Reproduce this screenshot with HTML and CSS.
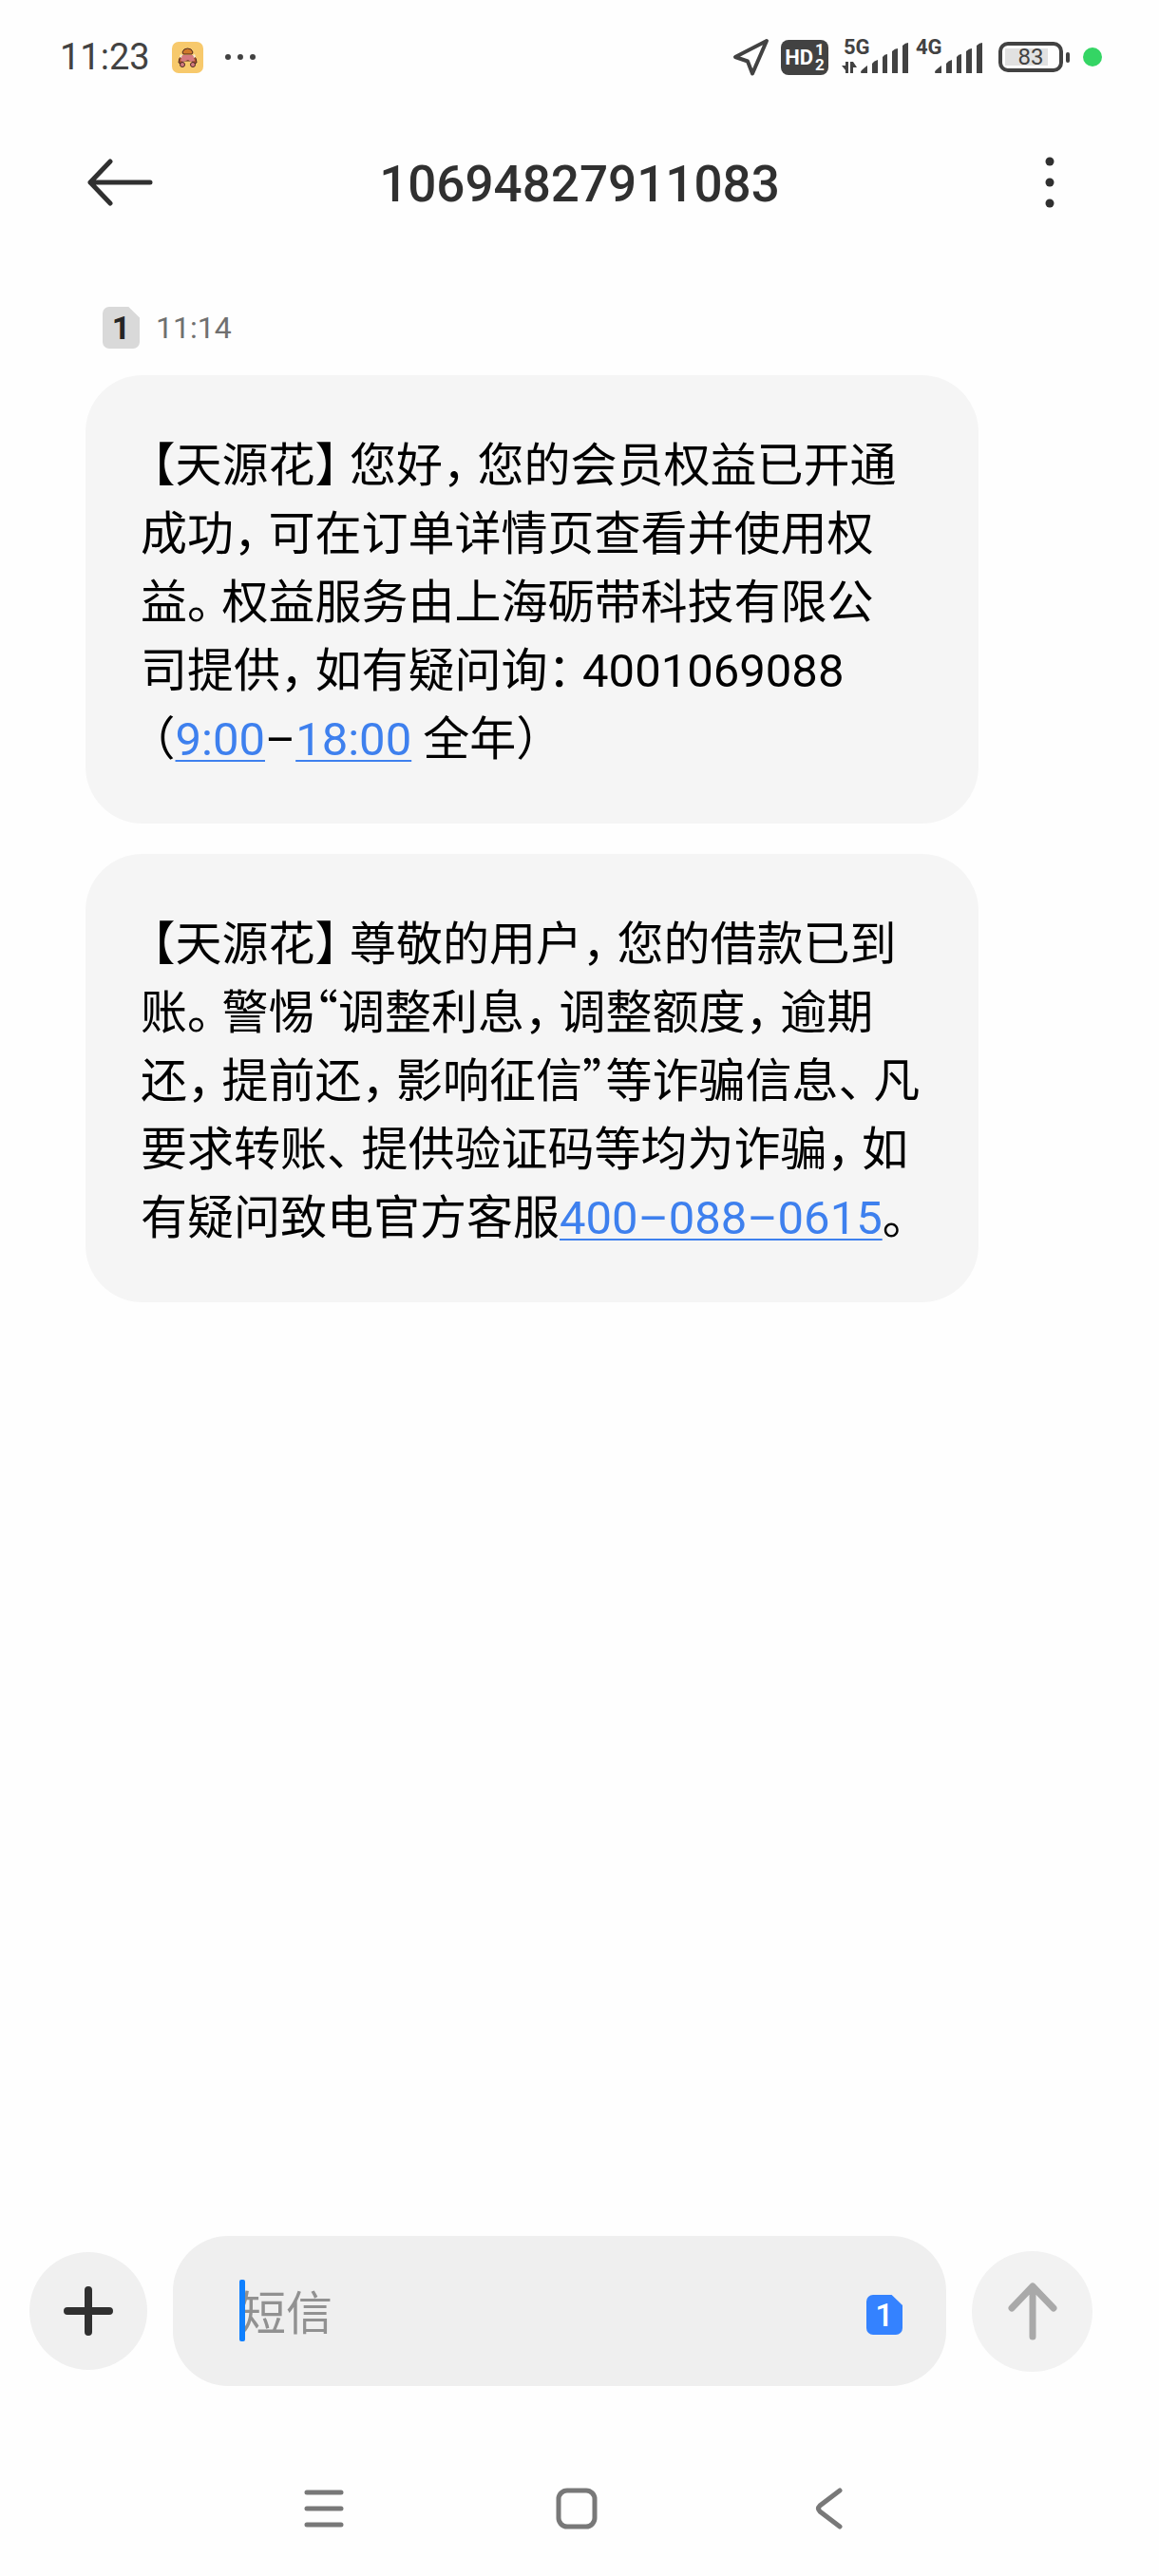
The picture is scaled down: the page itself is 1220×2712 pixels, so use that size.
FILE: index.html
```
<!DOCTYPE html>
<html lang="zh-CN">
<head>
    <meta charset="UTF-8">
    <meta name="viewport" content="width=device-width, initial-scale=1.0">
    <title>10694827911083</title>
    <link rel="stylesheet" href="styles.css">
</head>
<body>
    <div class="status-bar">
        <span class="clock">11:23</span>
        <svg class="app-icon" width="33" height="33" viewBox="0 0 33 33">
            <rect width="33" height="33" rx="7" fill="#f7c96c"/>
            <path d="M10 15q-3 2-3 7l3 1 2-3h9l2 3 3-1q0-5-3-7z" fill="#a9502f" stroke="#4d2a22" stroke-width="1"/>
            <path d="M11 11q1-4 5.500-4t5.500 4l-1 2H12z" fill="#cf7a2c" stroke="#4d2a22" stroke-width="1"/>
            <path d="M11 14h11l2 6-4 1-3-2-5 2-3-1z" fill="#d57a80"/>
            <path d="M9 13l2 1-1 3-2-1zM22 14l2-1 1 3-2 1z" fill="#f6ead2"/>
            <circle cx="11" cy="24" r="2.500" fill="#d57a80" stroke="#4d2a22"/>
            <circle cx="22" cy="24" r="2.500" fill="#d57a80" stroke="#4d2a22"/>
        </svg>
        <svg class="more-apps" width="32" height="8" viewBox="0 0 32 8" fill="#424242">
            <circle cx="3" cy="4" r="3"/>
            <circle cx="16" cy="4" r="3"/>
            <circle cx="29" cy="4" r="3"/>
        </svg>
        <div class="status-right">
            <svg class="location" width="42" height="42" viewBox="0 0 42 42">
                <path d="M37 4L4 21l13 4.500 5 13z" fill="none" stroke="#424242" stroke-width="4" stroke-linejoin="round"/>
            </svg>
            <span class="hd">HD<span class="hd-sims"><span>1</span><span>2</span></span></span>
            <span class="signal">
                <span class="network">5G</span>
                <svg width="72" height="36" viewBox="0 0 72 36" fill="#424242">
                    <path d="M5 23h3v12H5v-3l-4-5h4zM10 35V23h3l4 6h-4v6z"/>
                    <path d="M22 35q-1 0-1-1 0-2 7-7v8zM33 35v-10q2-3 6-4v14zM44 35V18q2-3 5-3v20zM54 35V12q3-3 6-3v26zM65 35V6q3-3 6-3v32z"/>
                </svg>
            </span>
            <span class="signal signal-second">
                <span class="network">4G</span>
                <svg width="53" height="36" viewBox="19 0 53 36" fill="#424242">
                    <path d="M22 35q-1 0-1-1 0-2 7-7v8zM33 35v-10q2-3 6-4v14zM44 35V18q2-3 5-3v20zM54 35V12q3-3 6-3v26zM65 35V6q3-3 6-3v32z"/>
                </svg>
            </span>
            <span class="battery"><span class="battery-level">83</span></span>
            <span class="privacy-dot"></span>
        </div>
    </div>

    <header class="header">
        <button class="icon-btn back" aria-label="返回">
            <svg width="74" height="50" viewBox="0 0 74 50" fill="none" stroke="#303030" stroke-width="5" stroke-linecap="round" stroke-linejoin="round">
                <path d="M25 3L4 25l21 22M4 25h63"/>
            </svg>
        </button>
        <h1>10694827911083</h1>
        <button class="icon-btn" aria-label="更多">
            <svg width="10" height="54" viewBox="0 0 10 54" fill="#303030">
                <circle cx="5" cy="5" r="4.500"/>
                <circle cx="5" cy="27" r="4.500"/>
                <circle cx="5" cy="49" r="4.500"/>
            </svg>
        </button>
    </header>

    <main class="messages">
        <div class="message-meta">
            <span class="sim">1</span>
            <time>11:14</time>
        </div>
        <p class="bubble"><span class="p open">【</span>天源花<span class="p">】</span>您好<span class="p">&#xFF0C;</span>您的会员权益已开通<br>成功<span class="p">&#xFF0C;</span>可在订单详情页查看并使用权<br>益<span class="p">。</span>权益服务由上海砺带科技有限公<br>司提供<span class="p">&#xFF0C;</span>如有疑问询<span class="p">&#xFF1A;</span>4001069088<br><span class="p open">&#xFF08;</span><a href="#">9:00</a>–<a href="#">18:00</a> 全年<span class="p">&#xFF09;</span></p>
        <p class="bubble"><span class="p open">【</span>天源花<span class="p">】</span>尊敬的用户<span class="p">&#xFF0C;</span>您的借款已到<br>账<span class="p">。</span>警惕<span class="quote">“</span>调整利息<span class="p">&#xFF0C;</span>调整额度<span class="p">&#xFF0C;</span>逾期<br>还<span class="p">&#xFF0C;</span>提前还<span class="p">&#xFF0C;</span>影响征信<span class="quote">”</span>等诈骗信息<span class="p">、</span>凡<br>要求转账<span class="p">、</span>提供验证码等均为诈骗<span class="p">&#xFF0C;</span>如<br>有疑问致电官方客服<a href="tel:4000880615">400–088–0615</a><span class="p">。</span></p>
    </main>

    <form class="composer">
        <button type="button" class="round-btn add" aria-label="添加">
            <svg width="52" height="52" viewBox="0 0 52 52" stroke="#303030" stroke-width="8" stroke-linecap="round">
                <path d="M26 4v44M4 26h44"/>
            </svg>
        </button>
        <div class="field">
            <span class="caret"></span>
            <input type="text" placeholder="短信" aria-label="短信">
            <button type="button" class="sim sim-active" aria-label="SIM 1">1</button>
        </div>
        <button type="button" class="round-btn send" aria-label="发送">
            <svg width="52" height="62" viewBox="0 0 52 62" fill="none" stroke="#a9a9a9" stroke-width="7" stroke-linecap="round" stroke-linejoin="round">
                <path d="M4 28L26 5l22 23M26 5v53"/>
            </svg>
        </button>
    </form>

    <nav class="nav-bar">
        <button class="icon-btn" aria-label="最近任务">
            <svg width="44" height="44" viewBox="0 0 44 44" stroke="#787878" stroke-width="5" stroke-linecap="round">
                <path d="M4 5h36M4 22h36M4 39h36"/>
            </svg>
        </button>
        <button class="icon-btn" aria-label="主屏幕">
            <svg width="44" height="44" viewBox="0 0 44 44" fill="none" stroke="#787878" stroke-width="5">
                <rect x="3" y="3" width="38" height="38" rx="9"/>
            </svg>
        </button>
        <button class="icon-btn" aria-label="返回">
            <svg width="44" height="44" viewBox="0 0 44 44" fill="none" stroke="#787878" stroke-width="5" stroke-linecap="round">
                <path d="M33 3L12 19q-3 3 0 6l21 16"/>
            </svg>
        </button>
    </nav>
</body>
</html>
```
FILE: styles.css
```
* {
    box-sizing: border-box;
}

body {
    display: flex;
    flex-direction: column;
    min-height: 100vh;
    margin: 0;
    background-color: #fefefe;
    color: #000;
    font-family: Roboto, "Noto Sans CJK SC", sans-serif;
}

button {
    padding: 0;
    border: none;
    background: none;
    font-family: inherit;
    cursor: pointer;
}

svg {
    display: block;
}

/* Status bar */
.status-bar {
    display: flex;
    align-items: center;
    height: 120px;
    padding: 0 60px 0 63px;
    color: #424242;
}

.clock {
    font-size: 38px;
}

.app-icon {
    margin-left: 23px;
}

.more-apps {
    margin-left: 23px;
}

.status-right {
    display: flex;
    align-items: center;
    margin-left: auto;
}

.hd {
    display: flex;
    align-items: center;
    justify-content: center;
    gap: 2px;
    width: 50px;
    height: 37px;
    margin-left: 10px;
    border-radius: 8px;
    background-color: #424242;
    color: #fff;
    font-size: 22px;
    font-weight: 700;
}

.hd-sims {
    display: flex;
    flex-direction: column;
    font-size: 17px;
    line-height: 16px;
}

.signal {
    position: relative;
    margin-left: 13px;
}

.signal-second {
    margin-left: 25px;
}

.network {
    position: absolute;
    top: -3px;
    left: 3px;
    font-size: 22px;
    font-weight: 700;
    line-height: 22px;
}

.signal-second .network {
    left: -18px;
}

.battery {
    position: relative;
    width: 68px;
    height: 32px;
    margin-left: 16px;
    padding: 3px;
    border: 4px solid #424242;
    border-radius: 10px;
}

.battery::after {
    content: "";
    position: absolute;
    top: 7px;
    right: -11px;
    width: 4px;
    height: 11px;
    border-radius: 2px;
    background-color: #424242;
}

.battery-level {
    display: block;
    height: 18px;
    background: linear-gradient(to right, #e1e1e1 83%, transparent 83%);
    font-size: 24px;
    line-height: 19px;
    text-align: center;
}

.privacy-dot {
    width: 20px;
    height: 20px;
    margin-left: 21px;
    border-radius: 50%;
    background-color: #34d564;
}

/* Header */
.header {
    display: flex;
    align-items: center;
    justify-content: space-between;
    height: 144px;
    padding: 0 65px;
}

.header h1 {
    margin: 0;
    padding-top: 4px;
    color: #303030;
    font-size: 53px;
    font-weight: 500;
}

.icon-btn {
    display: flex;
    align-items: center;
    justify-content: center;
    width: 100px;
    height: 70px;
}

.back {
    justify-content: flex-end;
}

/* Conversation */
.messages {
    flex: 1;
    padding: 58px 190px 0 90px;
}

.message-meta {
    display: flex;
    align-items: center;
    gap: 17px;
    height: 46px;
    margin-bottom: 27px;
    padding-left: 18px;
}

.message-meta time {
    color: #707070;
    font-size: 32px;
}

.sim {
    display: flex;
    align-items: center;
    justify-content: center;
    width: 39px;
    height: 44px;
    border-radius: 7px;
    background-color: #d9d9d9;
    clip-path: polygon(0 0, 70% 0, 100% 26%, 100% 100%, 0 100%);
    color: #252525;
    font-size: 34px;
    font-weight: 700;
}

.bubble {
    margin: 0 0 32px;
    padding: 60px 58px 52px;
    border-radius: 60px;
    background-color: #f5f5f5;
    font-size: 49px;
    line-height: 72px;
    white-space: nowrap;
}

.bubble a {
    color: #3e80ee;
    text-decoration: underline;
    text-decoration-thickness: 2px;
    text-underline-offset: 5px;
}

/* half-width punctuation with breathing room */
.p {
    padding-right: 12px;
    font-feature-settings: "halt";
}

.open {
    padding: 0 0 0 12px;
}

.quote {
    font-family: "Noto Sans CJK SC", sans-serif;
    font-feature-settings: "halt";
    line-height: 1;
}

/* Composer */
.composer {
    display: flex;
    align-items: center;
    padding: 0 70px 0 31px;
}

.round-btn {
    display: flex;
    align-items: center;
    justify-content: center;
    width: 124px;
    height: 124px;
    border-radius: 50%;
    background-color: #f0f0f0;
}

.send {
    width: 127px;
    height: 127px;
    background-color: #f2f2f2;
}

.field {
    position: relative;
    display: flex;
    flex: 1;
    align-items: center;
    height: 158px;
    margin: 0 27px;
    padding: 0 46px 0 70px;
    border-radius: 58px;
    background-color: #efefef;
}

.field input {
    flex: 1;
    min-width: 0;
    padding: 6px 0 0;
    border: none;
    outline: none;
    background: none;
    font-family: inherit;
    font-size: 49px;
}

.field input::placeholder {
    color: #919191;
}

.caret {
    position: absolute;
    top: 46px;
    left: 70px;
    width: 6px;
    height: 65px;
    border-radius: 2px;
    background-color: #0f80ff;
}

.sim-active {
    width: 38px;
    height: 42px;
    margin-top: 8px;
    background-color: #3482ff;
    color: #fff;
    font-weight: 500;
}

/* System navigation */
.nav-bar {
    display: flex;
    align-items: center;
    justify-content: center;
    gap: 166px;
    height: 142px;
    margin-top: 58px;
    padding-right: 6px;
}
```
